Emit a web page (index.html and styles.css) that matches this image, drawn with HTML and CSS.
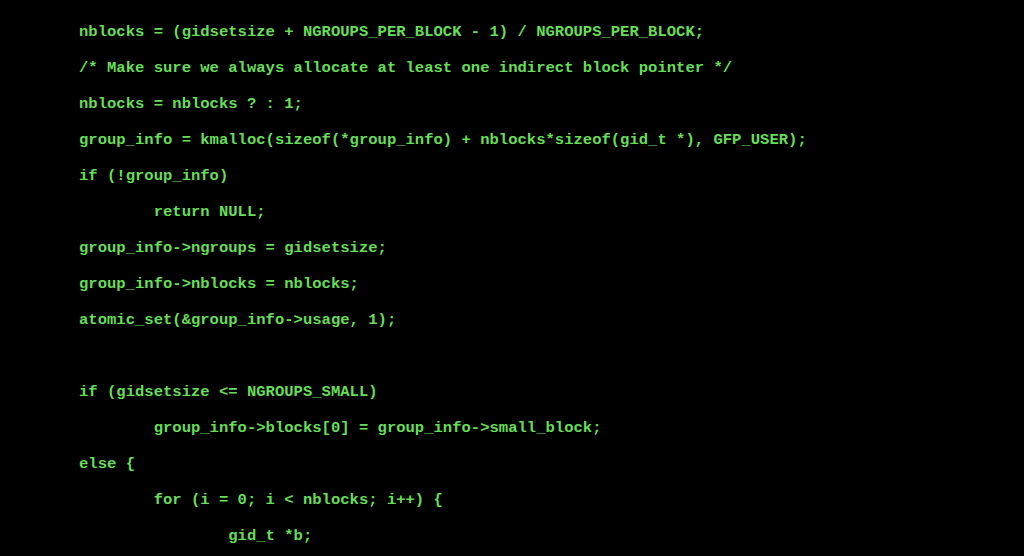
FILE: index.html
```html
<!DOCTYPE html>
<html>
<head>
<meta charset="utf-8">
<link rel="stylesheet" href="styles.css">
</head>
<body>
<div class="code">
<div class="line">nblocks = (gidsetsize + NGROUPS_PER_BLOCK - 1) / NGROUPS_PER_BLOCK;</div>
<div class="line">/* Make sure we always allocate at least one indirect block pointer */</div>
<div class="line">nblocks = nblocks ? : 1;</div>
<div class="line">group_info = kmalloc(sizeof(*group_info) + nblocks*sizeof(gid_t *), GFP_USER);</div>
<div class="line">if (!group_info)</div>
<div class="line">        return NULL;</div>
<div class="line">group_info-&gt;ngroups = gidsetsize;</div>
<div class="line">group_info-&gt;nblocks = nblocks;</div>
<div class="line">atomic_set(&amp;group_info-&gt;usage, 1);</div>
<div class="line"> </div>
<div class="line">if (gidsetsize &lt;= NGROUPS_SMALL)</div>
<div class="line">        group_info-&gt;blocks[0] = group_info-&gt;small_block;</div>
<div class="line">else {</div>
<div class="line">        for (i = 0; i &lt; nblocks; i++) {</div>
<div class="line">                gid_t *b;</div>
</div>
</body>
</html>
```
FILE: styles.css
```css
html, body {
  margin: 0;
  padding: 0;
  background: #000;
  height: 100%;
  overflow: hidden;
}
.code {
  padding: 14px 0 0 79px;
  font-family: "Liberation Mono", "Courier New", monospace;
  font-weight: bold;
  font-size: 15.55px;
  color: #66de58;
}
.line {
  white-space: pre;
  height: 36px;
  line-height: 36px;
}
```
